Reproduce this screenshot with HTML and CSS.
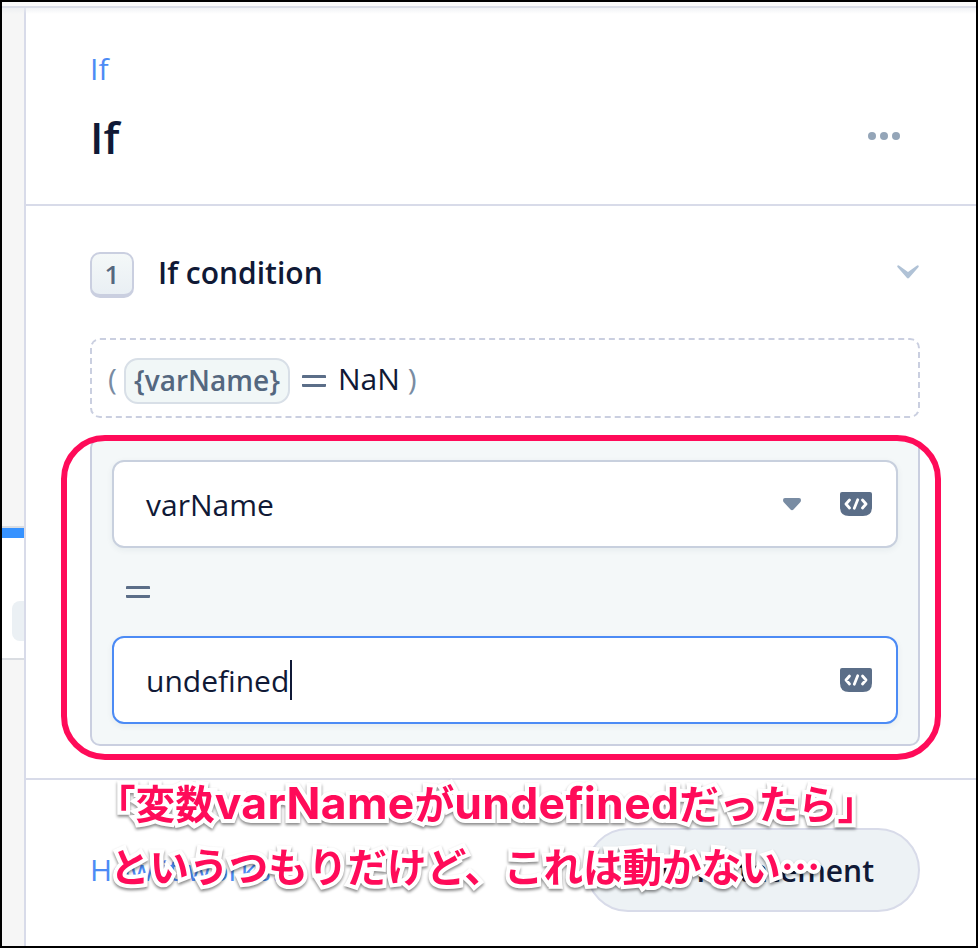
FILE: index.html
```html
<!DOCTYPE html>
<html lang="en">
<head>
<meta charset="utf-8">
<title>If</title>
<link rel="stylesheet" href="styles.css">
</head>
<body>
<div class="window">
  <aside class="canvas">
    <div class="node"><span class="node-chip"></span></div>
  </aside>
  <main class="panel">
    <header class="head">
      <a class="crumb">If</a>
      <div class="title-row">
        <h1>If</h1>
        <span class="dots"><i></i><i></i><i></i></span>
      </div>
    </header>
    <section class="body">
      <div class="step">
        <span class="num">1</span>
        <h2>If condition</h2>
        <svg class="chev" width="24" height="16" viewBox="0 0 24 16"><path d="M1.3 1.8Q2.2.8 3.3 1.7L12 8 20.700 1.700Q21.800.8 22.700 1.800 23 2.600 22.400 3.300L13.200 13.800Q12 15 10.800 13.800L1.600 3.300Q1 2.600 1.300 1.800Z" fill="#b0c2d6"/></svg>
      </div>
      <div class="preview">
        <span class="paren">(</span><span class="pill">{varName}</span><span class="eq"></span><span class="val">NaN</span><span class="paren close">)</span>
      </div>
      <div class="group">
        <div class="field">
          <span class="text">varName</span>
          <svg class="caret" width="18" height="13" viewBox="0 0 18 13"><path d="M2 0H16Q18 0 18 2 18 3.500 17 4.500L10.500 11.500Q9 13 7.500 11.500L1 4.500Q0 3.500 0 2 0 0 2 0Z" fill="#798ca3"/></svg>
          <svg class="code" width="32" height="24" viewBox="0 0 32 24"><path d="M2 0H30Q32 0 32 2V15Q32 24 23 24H9Q0 24 0 15V2Q0 0 2 0Z" fill="#5b6e88"/><path d="M9.500 8 6 12 9.500 16M17.700 7.800 14.300 16.200M22.500 8 26 12 22.500 16" fill="none" stroke="#fff" stroke-width="2.800" stroke-linecap="round" stroke-linejoin="round"/></svg>
        </div>
        <div class="operator"><span class="eq"></span></div>
        <div class="field active">
          <span class="text">undefined</span><i class="cursor"></i>
          <svg class="code" width="32" height="24" viewBox="0 0 32 24"><path d="M2 0H30Q32 0 32 2V15Q32 24 23 24H9Q0 24 0 15V2Q0 0 2 0Z" fill="#5b6e88"/><path d="M9.500 8 6 12 9.500 16M17.700 7.800 14.300 16.200M22.500 8 26 12 22.500 16" fill="none" stroke="#fff" stroke-width="2.800" stroke-linecap="round" stroke-linejoin="round"/></svg>
        </div>
      </div>
    </section>
    <footer class="foot">
      <a class="help">How it works?</a>
      <span class="button">Add If statement</span>
    </footer>
  </main>
  <div class="frame"></div>
  <p class="note first">「変数<b>varName</b>が<b>undefined</b>だったら」</p>
  <p class="note second">というつもりだけど、これは動かない…</p>
</div>
</body>
</html>
```
FILE: styles.css
```css
* { box-sizing: border-box; margin: 0; }
body { font: 30px/40px "Open Sans", "Noto Sans", sans-serif; color: #101936; }
.window { position: relative; width: 978px; height: 948px; padding-top: 4px; border: 2px solid #000; display: flex; background: #fafafa; overflow: hidden; }
.window::before { content: ""; position: absolute; z-index: 1; left: 0; right: 0; top: 4px; height: 8px; background: linear-gradient(#dadde7 0 2px, #e9ecf0aa 2px, #ffffff00); }
.canvas { width: 22px; background: #f6f6f6; padding-top: 520px; }
.node { height: 134px; padding: 73px 0 0 10px; background: #fff; border-top: 2px solid #dadde2; border-bottom: 2px solid #dadde2; position: relative; }
.node::before { content: ""; position: absolute; left: 0; right: 0; top: 0; height: 10px; background: #3692ff; }
.node-chip { display: block; height: 40px; border-radius: 8px 0 0 8px; background: #ebf0f4; }
.panel { flex: 1; background: #fff; border-left: 2px solid #d8dbe9; }
.head { height: 200px; padding: 43px 76px 0 64px; border-bottom: 2px solid #d8dbe9; }
.crumb { display: block; color: #4c8bf5; }
.title-row { display: flex; justify-content: space-between; align-items: center; margin-top: 14px; height: 66px; }
h1 { font-size: 44px; line-height: 60px; font-weight: 600; padding-top: 2px; }
.dots { display: flex; gap: 4px; }
.dots i { width: 8px; height: 8px; border-radius: 50%; background: #94a5b8; }
.body { height: 574px; padding: 46px 56px 0 64px; border-bottom: 2px solid #d8dbe9; }
.step { display: flex; align-items: center; height: 46px; }
.num { width: 44px; height: 46px; border: 2px solid #cacfe0; border-bottom-width: 4px; border-radius: 10px; background: linear-gradient(#f4f8f8, #e9eff4); color: #56677f; font-size: 26px; line-height: 41px; font-weight: 600; text-align: center; }
h2 { font-size: 30px; line-height: 40px; font-weight: 600; margin: -4px 0 0 24px; }
.chev { margin: -6px 0 0 auto; }
.preview { display: flex; align-items: center; height: 80px; margin-top: 40px; padding-left: 16px; border: 2px dashed #cacfe0; border-radius: 10px; }
.paren, .val { padding-top: 2px; }
.paren { color: #798ca3; width: 16px; }
.pill { height: 46px; border: 2px solid #d8dfe7; border-radius: 14px; background: #f1f7f7; color: #54677f; font-size: 28px; line-height: 40px; font-weight: 600; width: 166px; text-align: center; margin-top: 5px; }
.eq { display: block; width: 24px; height: 12px; border-top: 3px solid #5b6e88; border-bottom: 3px solid #5b6e88; border-radius: 1px; }
.preview .eq { margin: 6px 12px 0; }
.close { margin-left: 8px; }
.group { height: 308px; margin-top: 20px; padding: 20px; border: 2px solid #cacfe0; border-radius: 10px; background: #f4f8f9; }
.field { display: flex; align-items: center; height: 88px; padding: 0 24px 0 32px; border: 2px solid #c8d0de; border-radius: 12px; background: #fff; box-shadow: 0 2px 6px #24385010; }
.text { padding-top: 2px; }
.active { border-color: #4c8bf5; }
.caret { margin-left: auto; }
.code { margin-left: 39px; }
.active .code { margin-left: auto; }
.cursor { width: 2px; height: 40px; background: #101936; margin-left: 1px; }
.operator { height: 88px; padding: 38px 0 0 14px; }
.foot { display: flex; justify-content: space-between; padding: 48px 56px 0 64px; }
.help { color: #4c8bf5; padding-top: 22px; }
.button { width: 334px; height: 84px; border: 2px solid #d8dbe9; border-radius: 42px; background: #edf2f5; line-height: 82px; font-weight: 600; text-align: right; padding-right: 44px; }
.frame { position: absolute; left: 59px; top: 433px; width: 880px; height: 325px; border: 6px solid #ff0b59; border-radius: 44px; }
.note { position: absolute; white-space: nowrap; font: 700 39.600px/60px "Noto Sans CJK JP", sans-serif; color: #ff0b59; -webkit-text-stroke: 8px #fff; paint-order: stroke fill; filter: drop-shadow(0 2px 1.500px #0007); }
.note b { font-family: Inter, sans-serif; font-weight: 650; font-size: 44.500px; letter-spacing: .3px; }
.first { left: 94px; top: 770px; }
.second { left: 108px; top: 833px; }
```
